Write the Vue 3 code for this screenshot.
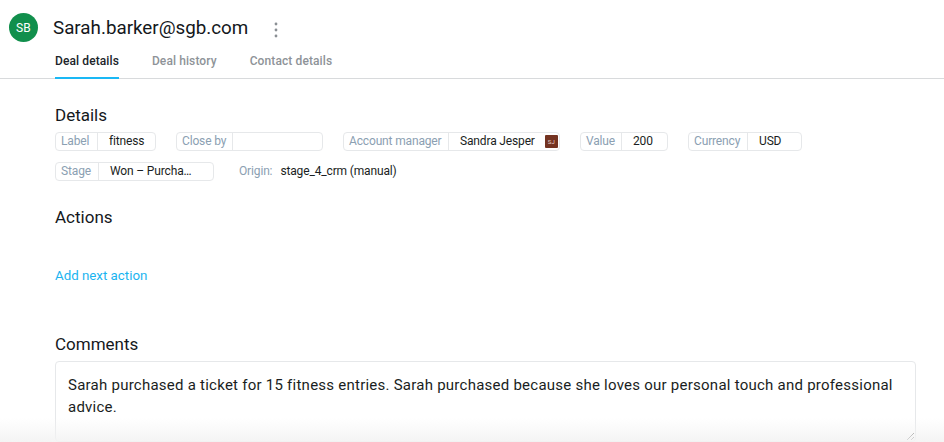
<script setup>
const tabs = [
  { name: 'Deal details', active: true },
  { name: 'Deal history', active: false },
  { name: 'Contact details', active: false },
]
const comment = 'Sarah purchased a ticket for 15 fitness entries. Sarah purchased because she loves our personal touch and professional advice.'
</script>

<template>
  <div class="page">
    <header class="head">
      <div class="avatar">SB</div>
      <h1 class="title">Sarah.barker@sgb.com</h1>
      <svg class="more" width="4" height="16" viewBox="0 0 4 16"><circle cx="2" cy="2" r="1.4"/><circle cx="2" cy="8" r="1.4"/><circle cx="2" cy="14" r="1.4"/></svg>
    </header>
    <nav class="tabs">
      <a v-for="t in tabs" :key="t.name" class="tab" :class="{ active: t.active }">{{ t.name }}</a>
    </nav>

    <main class="content">
      <h2 class="h-details">Details</h2>
      <div class="row">
        <div class="field f-label"><span class="key">Label</span><span class="val">fitness</span></div>
        <div class="field f-close"><span class="key">Close by</span><span class="val"></span></div>
        <div class="field f-acct"><span class="key">Account manager</span><span class="val">Sandra Jesper<i class="badge">SJ</i></span></div>
        <div class="field f-value"><span class="key">Value</span><span class="val">200</span></div>
        <div class="field f-cur"><span class="key">Currency</span><span class="val">USD</span></div>
      </div>
      <div class="row row2">
        <div class="field f-stage"><span class="key">Stage</span><span class="val">Won – Purcha…</span></div>
        <div class="origin"><span class="okey">Origin:</span><span class="oval">stage_4_crm (manual)</span></div>
      </div>

      <h2 class="h-actions">Actions</h2>
      <a class="add">Add next action</a>

      <h2 class="h-comments">Comments</h2>
      <textarea class="comment" :value="comment" spellcheck="false"></textarea>
    </main>
    <div class="fade"></div>
  </div>
</template>

<style>
html, body { margin: 0; background: #fff; overflow: hidden; }
</style>

<style scoped>
.page { position: relative; width: 944px; height: 442px; overflow: hidden; font-family: Roboto, "Liberation Sans", sans-serif; color: #14181c; background: #fff; }
.head { display: flex; align-items: center; height: 53px; padding: 2px 0 0 9px; box-sizing: border-box; }
.avatar { width: 29px; height: 29px; border-radius: 50%; background: #118f4c; color: #fff; font-size: 12px; font-weight: 400; letter-spacing: .3px; display: flex; align-items: center; justify-content: center; }
.title { margin: 0 0 0 15px; font-size: 18.8px; font-weight: 400; letter-spacing: 0; line-height: 28px; }
.more { margin-left: 26px; margin-top: 4px; fill: #8a8f94; }
.tabs { display: flex; gap: 33px; padding-left: 55px; height: 25px; border-bottom: 1px solid #d8dadc; }
.tab { font-size: 12px; font-weight: 500; letter-spacing: .1px; color: #8e9398; line-height: 17px; height: 26px; box-sizing: border-box; }
.tab.active { color: #20242a; border-bottom: 2px solid #1ab8f5; }
.content { padding: 0 0 0 55px; }
h2 { margin: 0; font-size: 17px; font-weight: 400; line-height: 22px; }
.h-details { margin-top: 25px; }
.row { display: flex; gap: 20px; margin-top: 6px; align-items: center; }
.row2 { margin-top: 11px; gap: 25px; }
.field { display: flex; height: 17px; border: 1px solid #e6e8ea; border-radius: 4px; font-size: 12px; letter-spacing: -.15px; line-height: 17px; }
.key { color: #8ba0b2; padding-left: 5px; box-sizing: border-box; border-right: 1px solid #e6e8ea; white-space: nowrap; }
.val { color: #1a1e22; padding-left: 11px; display: flex; align-items: center; white-space: nowrap; }
.f-label { width: 99px; } .f-label .key { width: 42px; }
.f-close { width: 145px; } .f-close .key { width: 56px; }
.f-acct { width: 215px; } .f-acct .key { width: 105px; }
.f-value { width: 86px; } .f-value .key { width: 41px; }
.f-cur { width: 112px; } .f-cur .key { width: 59px; }
.f-stage { width: 157px; } .f-stage .key { width: 43px; }
.badge { display: inline-flex; align-items: center; justify-content: center; width: 13px; height: 13px; margin-left: 10px; background: #743321; color: #e8d6cf; font-size: 6px; font-style: normal; letter-spacing: 0; border-radius: 1px; }
.origin { display: flex; font-size: 12px; letter-spacing: -.15px; line-height: 19px; }
.okey { color: #8ba0b2; }
.oval { color: #1a1e22; margin-left: 8px; }
.h-actions { margin-top: 25px; }
.add { display: block; margin-top: 38px; font-size: 13.3px; line-height: 20px; color: #1ab4f0; }
.h-comments { margin-top: 47px; }
.comment { display: block; width: 861px; height: 81px; margin-top: 6px; box-sizing: border-box; padding: 12px; border: 1px solid #e6e8ea; border-radius: 4px; font-family: inherit; font-size: 15px; line-height: 22px; letter-spacing: .245px; color: #1a1e22; outline: none; overflow: hidden; }
.fade { position: absolute; left: 0; right: 0; bottom: 0; height: 24px; background: linear-gradient(to bottom, rgba(245,245,245,0), rgba(243,243,243,.9)); pointer-events: none; }
</style>
